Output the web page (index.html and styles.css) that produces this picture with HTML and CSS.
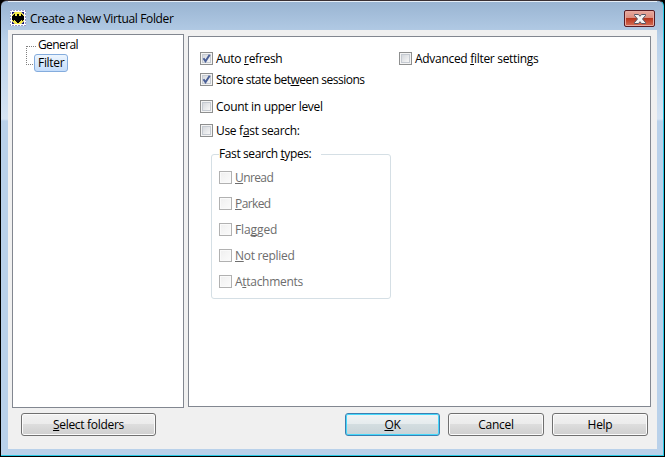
FILE: index.html
```html
<!DOCTYPE html>
<html lang="en">
<head>
    <meta charset="UTF-8">
    <title>Create a New Virtual Folder</title>
    <link rel="stylesheet" href="styles.css">
</head>
<body>
    <div class="window">
        <div class="titlebar">
            <svg class="app-icon" width="16" height="16" viewBox="0 0 16 16">
                <rect width="16" height="16" fill="#fff"/>
                <rect x=".5" y=".5" width="15" height="15" fill="none" stroke="#30308c" stroke-dasharray="1 2"/>
                <path d="M2 2h3L2 5zM14 2h-3l3 3zM2 14h3l-3-3zM14 14h-3l3-3z" fill="#16167c"/>
                <path d="M5 2h6l3 3v6l-3 3H5l-3-3V5z" fill="#f4e84a"/>
                <path d="M2 6h1V5h1V4h1v2h2V4h2v2h2V4h1v1h1v1h1v4h-1v1h-1v-1h-1v1h-1v1H9v1H7v-1H6v-1H5v-1H4v1H3v-1H2z" fill="#000" shape-rendering="crispEdges"/>
            </svg>
            <span class="title">Create a New Virtual Folder</span>
            <button class="close" aria-label="Close">
                <svg width="12" height="10" viewBox="0 0 12 10">
                    <path d="M.5 .5h4L6 2.300 7.500 .5h4v1L8.500 5l3 3.500v1h-4L6 7.700 4.500 9.500h-4v-1L3.500 5l-3-3.500z" fill="#f4f4f4" stroke="#535666"/>
                </svg>
            </button>
        </div>

        <div class="client">
            <div class="panels">
                <div class="tree">
                    <div class="node"><span class="general">General</span></div>
                    <div class="node last"><span class="selected">Filter</span></div>
                </div>

                <div class="page">
                    <div class="column">
                        <label class="check">
                            <i class="box"><svg class="tick" width="11" height="11" viewBox="0 0 11 11"><path d="M2.500 5.300L4.500 8.300 8.700 1.800"/></svg></i>
                            <span>Auto <u>r</u>efresh</span>
                        </label>
                        <label class="check store">
                            <i class="box"><svg class="tick" width="11" height="11" viewBox="0 0 11 11"><path d="M2.500 5.300L4.500 8.300 8.700 1.800"/></svg></i>
                            <span>Store state bet<u>w</u>een sessions</span>
                        </label>
                        <label class="check count"><i class="box"></i><span>Count in upper level</span></label>
                        <label class="check fast"><i class="box"></i><span>Use f<u>a</u>st search:</span></label>

                        <fieldset class="group">
                            <legend>Fast search <u>t</u>ypes:</legend>
                            <label class="check unread"><i class="box"></i><span><u>U</u>nread</span></label>
                            <label class="check parked"><i class="box"></i><span><u>P</u>arked</span></label>
                            <label class="check flagged"><i class="box"></i><span>Fla<u>g</u>ged</span></label>
                            <label class="check"><i class="box"></i><span><u>N</u>ot replied</span></label>
                            <label class="check"><i class="box"></i><span>A<u>t</u>tachments</span></label>
                        </fieldset>
                    </div>
                    <div class="column">
                        <label class="check"><i class="box"></i><span>Advanced <u>f</u>ilter settings</span></label>
                    </div>
                </div>
            </div>

            <div class="buttons">
                <button class="btn select"><span><u>S</u>elect folders</span></button>
                <button class="btn ok"><span><u>O</u>K</span></button>
                <button class="btn cancel"><span>Cancel</span></button>
                <button class="btn help"><span>Help</span></button>
            </div>
        </div>
    </div>
</body>
</html>
```

FILE: styles.css
```css
* {
    box-sizing: border-box;
}

body {
    margin: 0;
    background: #000;
    font-family: "Open Sans", "Noto Sans", sans-serif;
    font-size: 12px;
    line-height: 16px;
    letter-spacing: -0.3px;
    color: #000;
}

u {
    text-underline-offset: 1px;
    text-decoration-thickness: 1px;
    text-decoration-skip-ink: none;
}

/* Window frame */
.window {
    width: 663px;
    height: 456px;
    margin-left: 1px;
    padding: 0 6px 6px 7px;
    border-right: 1px solid #27c9e5;
    border-bottom: 1px solid #27c9e5;
    border-top: 1px solid #3a3034;
    border-radius: 6px 6px 0 0;
    background: linear-gradient(#99b4d2, #b9d1ea 40px, #d6e4f3 118px, #b9d1ea 120px);
}

.titlebar {
    display: flex;
    height: 29px;
    padding: 9px 2px 0;
    box-shadow: inset 0 1px #e6eef7;
}

.app-icon {
    flex: none;
}

.title {
    margin: 1px 0 0 4px;
    letter-spacing: -0.35px;
}

.close {
    display: flex;
    align-items: center;
    justify-content: center;
    width: 31px;
    height: 17px;
    margin-left: auto;
    padding: 0;
    border: 1px solid #571b24;
    border-radius: 2px;
    background: linear-gradient(#e9a99e, #d98d7f 48%, #b9351d 50%, #d56f57);
    box-shadow: inset 0 0 0 1px #e8aaa0;
}

.client {
    height: 419px;
    padding: 4px;
    background: #f0f0f0;
}

.panels {
    display: flex;
    align-items: flex-start;
    gap: 4px;
    height: 375px;
}

/* Folder tree */
.tree {
    width: 172px;
    height: 374px;
    padding: 1px 0 0 13px;
    border: 1px solid #828790;
    background: #fff;
    letter-spacing: -0.1px;
}

.node {
    position: relative;
    height: 18px;
    padding-left: 8px;
}

.node::before {
    content: "";
    position: absolute;
    left: 0;
    top: 10px;
    width: 9px;
    height: 18px;
    border-top: 1px dotted #808080;
    border-left: 1px dotted #808080;
}

.node.last::before {
    height: 1px;
    border-left: 0;
}

.node span {
    position: relative;
    display: inline-block;
    height: 18px;
    padding: 0 3px;
    border: 1px solid transparent;
}

.node .general {
    letter-spacing: -0.6px;
}

.node .selected {
    border-color: #84acdd;
    border-radius: 3px;
    background: linear-gradient(#edf5fe, #c5ddfb);
    letter-spacing: -0.3px;
}

/* Settings page */
.page {
    display: flex;
    width: 463px;
    height: 371px;
    margin-top: 2px;
    padding: 14px 0 0 11px;
    border: 1px solid #828790;
    background: #fff;
}

.column {
    width: 199px;
}

.check {
    display: flex;
    align-items: flex-start;
    gap: 3px;
    height: 16px;
    white-space: nowrap;
}

.box {
    flex: none;
    width: 13px;
    height: 13px;
    margin-top: 1px;
    border: 1px solid #8e8f8f;
    background: linear-gradient(135deg, #cbcfd5, #f6f6f6 80%);
    box-shadow: inset 0 0 0 1px #f4f4f4, inset 0 0 0 2px #c5cad1;
}

.tick {
    display: block;
    fill: none;
    stroke: #4a5f97;
    stroke-width: 2;
}

.store {
    margin-top: 5px;
    letter-spacing: -0.5px;
}

.count {
    margin-top: 11px;
}

.fast {
    margin-top: 8px;
}

.group {
    width: 180px;
    height: 153px;
    margin: 7px 0 0 11px;
    padding: 8px 0 0 7px;
    border: 1px solid #d5dfe5;
    border-radius: 3px;
}

.group legend {
    width: 102px;
    height: 16px;
    padding: 0;
    white-space: nowrap;
    letter-spacing: -0.4px;
}

.group .check {
    margin-bottom: 10px;
    color: #6d6d6d;
}

.group .unread,
.group .parked {
    letter-spacing: -0.6px;
}

.group .flagged {
    letter-spacing: -0.1px;
}

.group .box {
    border-color: #b1b1b1;
    background: linear-gradient(135deg, #efefef, #fbfbfb);
    box-shadow: inset 0 0 0 1px #fafafa;
}

/* Bottom buttons */
.buttons {
    display: flex;
    padding: 4px 5px 0 9px;
}

.btn {
    width: 96px;
    height: 23px;
    padding: 0;
    border: 1px solid #707070;
    border-radius: 3px;
    background: linear-gradient(#f2f2f2, #ebebeb 49%, #dddddd 50%, #cfcfcf);
    box-shadow: inset 0 0 0 1px #fbfbfb;
    font: inherit;
    letter-spacing: inherit;
    color: #000;
}

.select {
    width: 135px;
    margin-right: auto;
}

.ok {
    width: 95px;
    margin-right: 8px;
    border-color: #3c7fb1;
    box-shadow: inset 0 0 0 1px #46d8fb;
    background: linear-gradient(#f0f3f4, #e5ebed 49%, #d3dde0 50%, #c9d3d7);
}

.cancel {
    margin-right: 8px;
}
```
